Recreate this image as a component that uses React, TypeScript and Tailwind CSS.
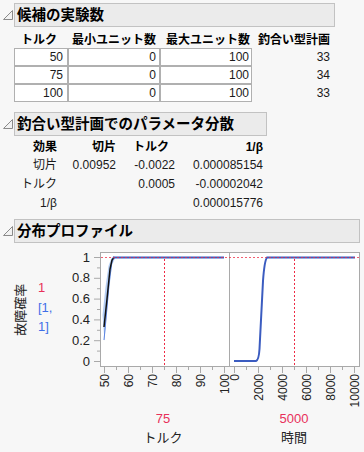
import React from 'react';

const FONT = "font-['Liberation_Sans','Noto_Sans_CJK_JP',sans-serif]";

function Disclosure() {
  return (
    <svg width="10" height="10" viewBox="0 0 10 10" className="shrink-0">
      <polygon points="9.5,0.5 9.5,9.5 0.5,9.5" fill="#f2f2f2" stroke="#8a8a8a" strokeWidth="1" />
    </svg>
  );
}

function SectionHeader({ title, width }: { title: string; width: string }) {
  return (
    <div className="flex items-center">
      <div className="w-[14px] flex justify-center pl-[2px]">
        <Disclosure />
      </div>
      <div className={`${width} h-[24px] bg-[#ebebeb] border border-[#c2c2c2] flex items-center pl-[2px]`}>
        <span className="text-[14.5px] font-bold text-black leading-none">{title}</span>
      </div>
    </div>
  );
}

const candidates = [
  { torque: 50, min: 0, max: 100, balanced: 33 },
  { torque: 75, min: 0, max: 100, balanced: 34 },
  { torque: 100, min: 0, max: 100, balanced: 33 },
];

const variance = [
  { label: '切片', a: '0.00952', b: '-0.0022', c: '0.000085154' },
  { label: 'トルク', a: '', b: '0.0005', c: '-0.00002042' },
  { label: '1/β', a: '', b: '', c: '0.000015776' },
];

function Chart() {
  const yMajors = [0, 1, 2, 3, 4, 5].map(i => 258 + i * 20.8);
  const yLabels = ['1', '0.8', '0.6', '0.4', '0.2', '0'];
  const yMinors = [0, 1, 2, 3, 4].map(i => 258 + i * 20.8 + 10.4);
  const leftMajors = [0, 1, 2, 3, 4, 5].map(k => ({ x: 104 + 24 * k, label: String(50 + 10 * k) }));
  const rightMajors = [0, 1, 2, 3, 4, 5].map(k => ({ x: 234 + 24 * k, label: String(2000 * k) }));
  const minors = [0, 1, 2, 3, 4].flatMap(k => [116 + 24 * k, 246 + 24 * k]);
  const red = '#ee2a44';
  const blue = '#3b5cc0';

  return (
    <svg width="304" height="164" viewBox="60 248 304 164" className="shrink-0">
      <rect x="100.5" y="253.5" width="259" height="114" fill="#ffffff" stroke="#a9a9a9" />
      <line x1="229.5" y1="253.5" x2="229.5" y2="367.5" stroke="#a9a9a9" />

      {yMajors.map((y, i) => (
        <g key={'ym' + i}>
          <line x1="94" y1={y + 0.5} x2="100" y2={y + 0.5} stroke="#a9a9a9" />
          <text x="90" y={y} textAnchor="end" dominantBaseline="central" fontSize="13" fill="#222" fontFamily="Liberation Sans, sans-serif">{yLabels[i]}</text>
        </g>
      ))}
      {yMinors.map((y, i) => (
        <line key={'yn' + i} x1="97" y1={y + 0.5} x2="100" y2={y + 0.5} stroke="#a9a9a9" />
      ))}

      {[...leftMajors, ...rightMajors].map((t, i) => (
        <g key={'xm' + i}>
          <line x1={t.x + 0.5} y1="368" x2={t.x + 0.5} y2="374" stroke="#a9a9a9" />
          <text transform={`translate(${t.x + 0.5},375) rotate(-90)`} textAnchor="end" dominantBaseline="central" fontSize="12" fill="#222" fontFamily="Liberation Sans, sans-serif">{t.label}</text>
        </g>
      ))}
      {minors.map((x, i) => (
        <line key={'xn' + i} x1={x + 0.5} y1="368" x2={x + 0.5} y2="371" stroke="#a9a9a9" />
      ))}

      {/* left: トルク */}
      <polygon points="102.5,316 105.5,288 108.5,267 111.5,259 114,257 115,259.5 112,266 109,292 106,322 104.5,342" fill="#b4cdf3" />
      <polyline points="104,341 106,320 109,285 112,262 114,258.5" fill="none" stroke="#5b84e0" strokeWidth="1" />
      <polyline points="104,328 107,300 110,270 112,261 114,258.5" fill="none" stroke="#111" strokeWidth="1.5" />
      <line x1="113" y1="258.5" x2="224" y2="258.5" stroke={blue} strokeWidth="2" />

      {/* right: 時間 */}
      <path d="M234,362 L256,362 C258,361.5 259,358 259.5,350 L263,282 C264,268 265,261 267,258.5 L355,258.5" fill="none" stroke={blue} strokeWidth="2" />

      <line x1="101" y1="258.5" x2="359" y2="258.5" stroke={red} strokeWidth="1" strokeDasharray="2 2" opacity="0.75" />
      <line x1="164.5" y1="260" x2="164.5" y2="367" stroke={red} strokeWidth="1" strokeDasharray="2 2" />
      <line x1="294.5" y1="260" x2="294.5" y2="367" stroke={red} strokeWidth="1" strokeDasharray="2 2" />
    </svg>
  );
}

export default function App() {
  return (
    <div className={`w-[364px] h-[452px] bg-[#f7f7f7] pt-[3px] text-[12px] text-[#1a1a1a] overflow-hidden ${FONT}`}>
      {/* 候補の実験数 */}
      <SectionHeader title="候補の実験数" width="w-[321px]" />
      <div className="flex mt-[5px] h-[16px] leading-[16px] font-bold text-black pl-[14px]">
        <div className="w-[54px] text-right pr-[11px]">トルク</div>
        <div className="w-[92px] text-right pr-[4px]">最小ユニット数</div>
        <div className="w-[92px] text-right pr-[2px]">最大ユニット数</div>
        <div className="w-[78px] text-right">釣合い型計画</div>
      </div>
      {candidates.map(r => (
        <div key={r.torque} className="flex h-[18px] pl-[14px]">
          <div className="w-[54px] h-[18px] bg-white border border-[#b0b0b0] text-right pr-[4px] leading-[16px]">{r.torque}</div>
          <div className="w-[92px] h-[18px] bg-white border border-[#b0b0b0] text-right pr-[3px] leading-[16px]">{r.min}</div>
          <div className="w-[92px] h-[18px] bg-white border border-[#b0b0b0] text-right pr-[2px] leading-[16px]">{r.max}</div>
          <div className="w-[78px] text-right leading-[18px]">{r.balanced}</div>
        </div>
      ))}

      {/* パラメータ分散 */}
      <div className="mt-[10px]">
        <SectionHeader title="釣合い型計画でのパラメータ分散" width="w-[253px]" />
      </div>
      <div className="flex mt-[2px] h-[18px] leading-[18px] font-bold text-black">
        <div className="w-[57px] text-right">効果</div>
        <div className="w-[59px] text-right">切片</div>
        <div className="w-[59px] text-right pr-[6px]">トルク</div>
        <div className="w-[88px] text-right">1/β</div>
      </div>
      {variance.map(r => (
        <div key={r.label} className="flex h-[19px] leading-[19px]">
          <div className="w-[57px] text-right">{r.label}</div>
          <div className="w-[59px] text-right">{r.a}</div>
          <div className="w-[59px] text-right">{r.b}</div>
          <div className="w-[88px] text-right">{r.c}</div>
        </div>
      ))}

      {/* 分布プロファイル */}
      <div className="mt-[6px]">
        <SectionHeader title="分布プロファイル" width="w-[346px]" />
      </div>
      <div className="flex mt-[4px] h-[164px]">
        <div className="w-[60px] flex items-start shrink-0">
          <div className="ml-[4px] w-[34px] h-[70px] mt-[28px] flex items-center justify-center">
            <span className="-rotate-90 whitespace-nowrap text-[13px] text-[#222]">故障確率</span>
          </div>
          <div className="mt-[31px] leading-[19.5px] text-[13px]">
            <div className="text-[#e8305a]">1</div>
            <div className="text-[#3f6fe8]">[1,</div>
            <div className="text-[#3f6fe8]">1]</div>
          </div>
        </div>
        <Chart />
      </div>
      <div className="flex text-[13px] text-[#222]">
        <div className="ml-[133px] w-[60px] text-center">
          <div className="h-[15px] leading-[15px] text-[#e8305a]">75</div>
          <div className="mt-[4px] leading-[15px]">トルク</div>
        </div>
        <div className="ml-[71px] w-[60px] text-center">
          <div className="h-[15px] leading-[15px] text-[#e8305a]">5000</div>
          <div className="mt-[4px] leading-[15px]">時間</div>
        </div>
      </div>
    </div>
  );
}
